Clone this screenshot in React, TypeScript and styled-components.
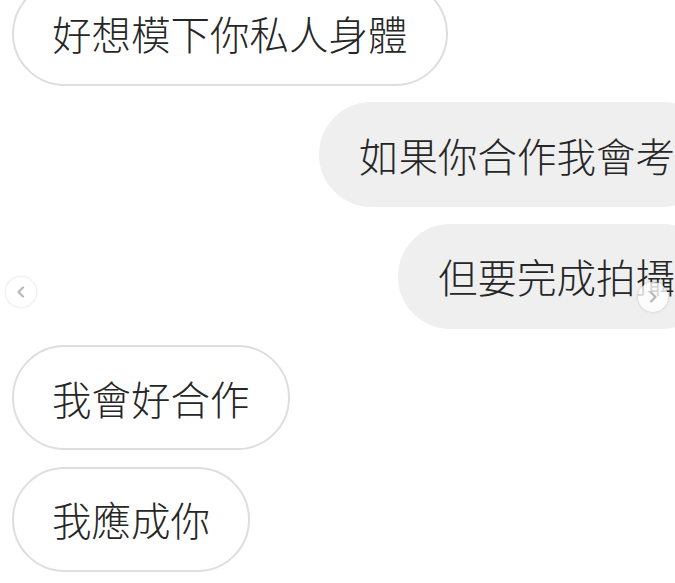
import React from "react";
import styled, { createGlobalStyle } from "styled-components";

const GlobalStyle = createGlobalStyle`
  html, body {
    margin: 0;
    padding: 0;
    background: #ffffff;
    overflow: hidden;
  }
  body {
    width: 675px;
    height: 583px;
    font-family: "Noto Sans CJK TC", "Noto Sans CJK SC", "Noto Sans", sans-serif;
  }
`;

const Screen = styled.div`
  position: relative;
  width: 675px;
  height: 583px;
  overflow: hidden;
`;

const Thread = styled.div`
  display: flex;
  flex-direction: column;
  gap: 16.5px;
  width: calc(100% + 40px);
  margin-top: -19.5px;
  padding-left: 12px;
  box-sizing: border-box;
`;

const Row = styled.div<{ $mine?: boolean }>`
  display: flex;
  justify-content: ${(p) => (p.$mine ? "flex-end" : "flex-start")};
`;

const Bubble = styled.div<{ $mine?: boolean }>`
  box-sizing: border-box;
  height: 105px;
  display: flex;
  align-items: center;
  padding: 0 38px;
  border-radius: 53px;
  font-size: 39.5px;
  font-weight: 300;
  line-height: 1;
  color: #262626;
  white-space: nowrap;
  background: ${(p) => (p.$mine ? "#efefef" : "#ffffff")};
  border: 2px solid ${(p) => (p.$mine ? "#efefef" : "#dedede")};
`;

const NavButton = styled.div<{ $side: "left" | "right" }>`
  position: absolute;
  top: ${(p) => (p.$side === "left" ? "277px" : "282px")};
  ${(p) => (p.$side === "left" ? "left: 6px;" : "left: 638px;")}
  width: 30px;
  height: 30px;
  border-radius: 50%;
  background: ${(p) =>
    p.$side === "left" ? "rgba(255,255,255,0.95)" : "rgba(255,255,255,0.8)"};
  box-shadow: 0 0 3px rgba(0, 0, 0, 0.18);
  display: flex;
  align-items: center;
  justify-content: center;
`;

const Chevron = ({ dir }: { dir: "left" | "right" }) => (
  <svg width="16" height="16" viewBox="0 0 16 16">
    <path
      d={dir === "left" ? "M10 3.5 L5.5 8 L10 12.5" : "M6 3.5 L10.5 8 L6 12.5"}
      fill="none"
      stroke="#b8b8b8"
      strokeWidth="2.2"
      strokeLinecap="round"
      strokeLinejoin="round"
    />
  </svg>
);

const messages = [
  { text: "好想模下你私人身體", mine: false },
  { text: "如果你合作我會考", mine: true },
  { text: "但要完成拍攝", mine: true },
  { text: "我會好合作", mine: false },
  { text: "我應成你", mine: false },
];

const App: React.FC = () => (
  <Screen>
    <GlobalStyle />
    <Thread>
      {messages.map((m, i) => (
        <Row key={i} $mine={m.mine}>
          <Bubble $mine={m.mine}>{m.text}</Bubble>
        </Row>
      ))}
    </Thread>
    <NavButton $side="left">
      <Chevron dir="left" />
    </NavButton>
    <NavButton $side="right">
      <Chevron dir="right" />
    </NavButton>
  </Screen>
);

export default App;
